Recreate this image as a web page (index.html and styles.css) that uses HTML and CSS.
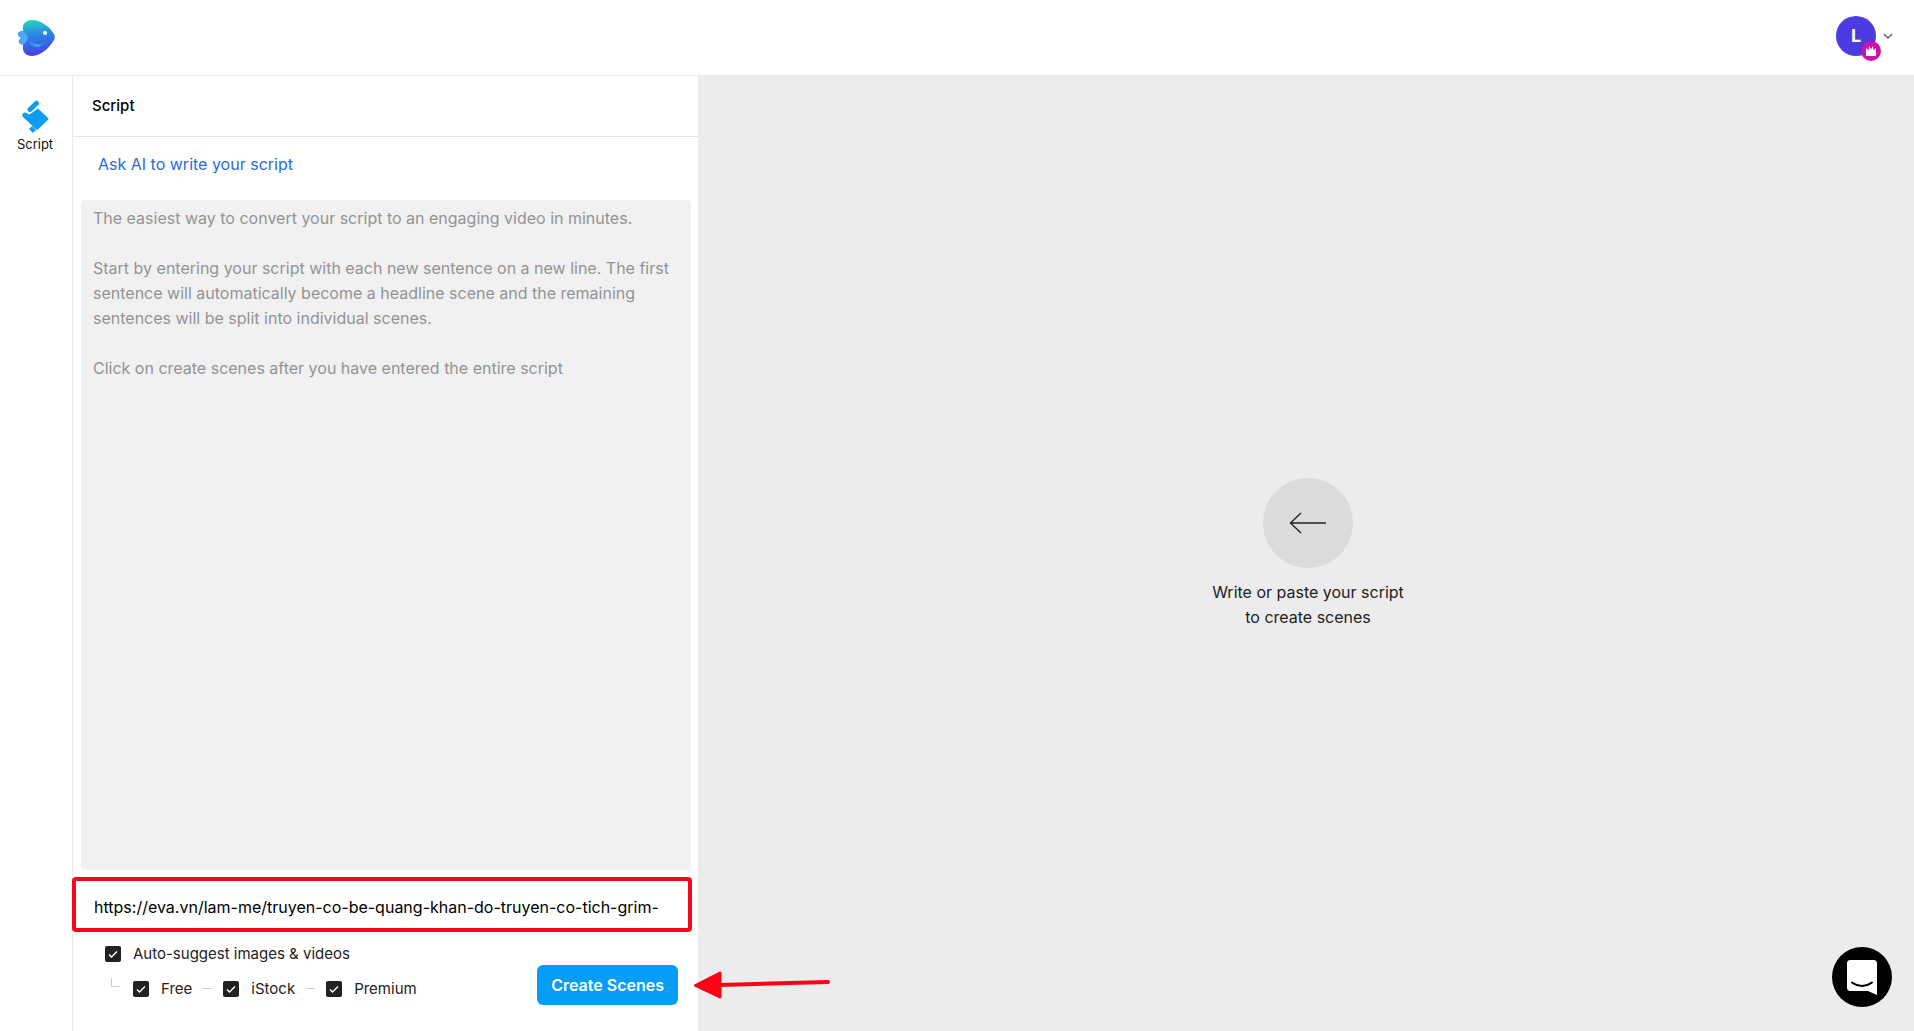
FILE: index.html
```html
<!DOCTYPE html>
<html lang="en">
<head>
<meta charset="utf-8">
<meta name="viewport" content="width=device-width, initial-scale=1">
<title>Script</title>
<link rel="stylesheet" href="styles.css">
</head>
<body>
<div class="app">
  <header class="topbar">
    <a class="logo" href="#" aria-label="Home">
      <svg width="38" height="38" viewBox="0 0 38 38" aria-hidden="true">
        <defs>
          <linearGradient id="body" x1="0.4" y1="0" x2="0.5" y2="1">
            <stop offset="0" stop-color="#22d3c0"/>
            <stop offset="0.45" stop-color="#2b7fe6"/>
            <stop offset="0.72" stop-color="#3d5ee8"/>
            <stop offset="1" stop-color="#4a3be0"/>
          </linearGradient>
          <linearGradient id="smile" x1="0" y1="0" x2="1" y2="0">
            <stop offset="0" stop-color="#2f8af0"/>
            <stop offset="0.5" stop-color="#2db4e4"/>
            <stop offset="1" stop-color="#3565e8"/>
          </linearGradient>
        </defs>
        <path d="M10 12C6 11 2 12 1 14c-1 2 1 4 3 5-2 1-3 3-2 5 2 2 6 3 8 1z" fill="#4aa3f5"/>
        <path d="M6 10C5 5 9 1 15 1c9 0 18 7 22 14 1 2 1 4 0 6-4 7-13 16-22 16-6 0-10-4-9-10 0-3 2-4 3-6 1-1 1-3 0-4-1-2-3-4-3-7z" fill="url(#body)"/>
        <path d="M5 13c3 0 5 3 6 6-1 3-3 6-6 7z" fill="#56a8f7"/>
        <path d="M12 21c4 5 11 6 17 1-2 4-6 6-9 6-4 0-8-3-8-7z" fill="url(#smile)"/>
        <circle cx="28" cy="14" r="2" fill="#fff"/>
      </svg>
    </a>
    <button class="account" type="button" aria-label="Account menu">
      <span class="avatar">L
        <span class="badge">
          <svg width="12" height="12" viewBox="0 0 12 12" aria-hidden="true"><path d="M1 3l2.600 2.500L4 1l2 3.500L8 1l.4 4.500L11 3v8H1z" fill="#fff"/></svg>
        </span>
      </span>
      <svg width="10" height="6" viewBox="0 0 10 6" aria-hidden="true"><path d="M1 1l4 4 4-4" fill="none" stroke="#666" stroke-width="1.500"/></svg>
    </button>
  </header>

  <div class="workspace">
    <nav class="rail">
      <a class="rail-item" href="#">
        <svg width="28" height="34" viewBox="0 0 28 34" aria-hidden="true">
          <path d="M1.500 14c1-1.500 3-2 5-.5l1.500 1L17 8.500 27 18c.6.600.6 1.200 0 1.800L17 29.500c-.6.600-1.200.6-1.800 0L2.500 17.500C1.200 16.400 1 15 1.500 14z" fill="#0f9df2"/>
          <path d="M9 9.500L15.500 3.200" stroke="#fff" stroke-width="7.500" stroke-linecap="round"/>
          <path d="M9 9.500L15.500 3.200" stroke="#0f9df2" stroke-width="5" stroke-linecap="round"/>
          <path d="M9.500 27.500l4 4" stroke="#0f9df2" stroke-width="4.500"/>
        </svg>
        <span>Script</span>
      </a>
    </nav>

    <section class="panel">
      <h1 class="panel-title">Script</h1>
      <div class="editor">
        <a class="ask-ai" href="#">Ask AI to write your script</a>
        <textarea class="script-box" aria-label="Script" placeholder="The easiest way to convert your script to an engaging video in minutes.&#10;&#10;Start by entering your script with each new sentence on a new line. The first sentence will automatically become a headline scene and the remaining sentences will be split into individual scenes.&#10;&#10;Click on create scenes after you have entered the entire script"></textarea>
      </div>
      <div class="url-row">
        <input class="url-input" type="text" aria-label="Article URL" value="https://eva.vn/lam-me/truyen-co-be-quang-khan-do-truyen-co-tich-grim-">
        <span class="highlight"></span>
      </div>
      <div class="actions">
        <div class="options">
          <label class="check"><input type="checkbox" checked>Auto-suggest images &amp; videos</label>
          <div class="sources">
            <span class="elbow"></span>
            <label class="check"><input type="checkbox" checked>Free</label>
            <span class="dash"></span>
            <label class="check"><input type="checkbox" checked>iStock</label>
            <span class="dash"></span>
            <label class="check"><input type="checkbox" checked>Premium</label>
          </div>
        </div>
        <div class="create-wrap">
          <button class="create" type="button">Create Scenes</button>
          <svg class="pointer" width="138" height="30" viewBox="0 0 138 30" aria-hidden="true">
            <path d="M26 15L135 12" stroke="#fb0516" stroke-width="4" stroke-linecap="round"/>
            <path d="M2.500 15.500L27 3v24z" fill="#fb0516" stroke="#fb0516" stroke-width="3" stroke-linejoin="round"/>
          </svg>
        </div>
      </div>
    </section>

    <main class="stage">
      <span class="stage-icon">
        <svg width="38" height="22" viewBox="0 0 38 22" aria-hidden="true"><path d="M37 11H1.500M12 1L1.500 11 12 21" fill="none" stroke="#222" stroke-width="1.400"/></svg>
      </span>
      <p class="stage-text">Write or paste your script<br>to create scenes</p>
    </main>
  </div>

  <button class="chat" type="button" aria-label="Open chat">
    <svg width="30" height="35" viewBox="0 0 30 35" aria-hidden="true">
      <path d="M4 0h22c3 0 4 1 4 4v31l-9-4H4c-3 0-4-1-4-4V4c0-3 1-4 4-4z" fill="#fff"/>
      <path d="M5 22.500c6 4.500 14 4.500 20 0" fill="none" stroke="#000" stroke-width="2" stroke-linecap="round"/>
    </svg>
  </button>
</div>
</body>
</html>
```
FILE: styles.css
```css
*, *::before, *::after { box-sizing: border-box; }

body {
  margin: 0;
  font-family: Inter, "Liberation Sans", sans-serif;
  font-size: 16px;
  line-height: 25px;
  color: #222;
  background: #fff;
}

button, input, textarea { font: inherit; color: inherit; }
button { border: 0; cursor: pointer; }
a { text-decoration: none; }
svg { display: block; }

.app {
  display: flex;
  flex-direction: column;
  min-height: 100vh;
}

/* Top bar */
.topbar {
  display: flex;
  align-items: center;
  justify-content: space-between;
  height: 76px;
  padding: 0 21px 0 17px;
  border-bottom: 1px solid #e9e9e9;
}

.account {
  display: flex;
  align-items: center;
  gap: 7px;
  padding: 0;
  margin-bottom: 4px;
  background: none;
}

.avatar {
  position: relative;
  display: flex;
  align-items: center;
  justify-content: center;
  width: 40px;
  height: 40px;
  border-radius: 50%;
  background: #4c3be0;
  color: #fff;
  font-size: 18px;
  font-weight: 700;
}

.badge {
  position: absolute;
  right: -5px;
  bottom: -5px;
  display: flex;
  align-items: center;
  justify-content: center;
  width: 20px;
  height: 20px;
  border-radius: 50%;
  background: #c715a8;
}

/* Columns */
.workspace {
  display: flex;
  flex: 1;
}

.rail {
  width: 73px;
  padding: 24px 2px 0 0;
  border-right: 1px solid #e9e9e9;
}

.rail-item {
  display: flex;
  flex-direction: column;
  align-items: center;
  color: #111;
  font-size: 13px;
  line-height: 20px;
}

.panel {
  display: flex;
  flex-direction: column;
  width: 625px;
}

.panel-title {
  margin: 0;
  padding: 17px 19px 18px;
  border-bottom: 1px solid #e2e2e2;
  color: #000;
  font-size: 15px;
  font-weight: 500;
}

.editor {
  display: flex;
  flex: 1;
  flex-direction: column;
  padding: 15px 7px 8px 8px;
}

.ask-ai {
  align-self: flex-start;
  margin: 0 17px 23px;
  color: #2b6ae0;
}

.script-box {
  flex: 1;
  min-height: 240px;
  padding: 6px 4px 6px 12px;
  border: 0;
  border-radius: 4px;
  background: #f1f1f1;
  resize: none;
}

.script-box::placeholder { color: #939393; opacity: 1; }

.url-row {
  position: relative;
  border-top: 1px solid #ededed;
  border-bottom: 1px solid #ededed;
}

.url-input {
  display: block;
  width: 100%;
  height: 55px;
  padding: 0 20px 0 21px;
  border: 0;
  background: none;
  color: #000;
}

.highlight {
  position: absolute;
  inset: -2px 6px 2px -1px;
  border: 4px solid #f8061c;
  border-radius: 4px;
  pointer-events: none;
}

/* Footer of the panel */
.actions {
  display: flex;
  align-items: flex-start;
  justify-content: space-between;
  padding: 6px 20px 26px 32px;
}

.options {
  display: flex;
  flex-direction: column;
  gap: 10px;
  font-size: 15px;
}

.check {
  display: flex;
  align-items: center;
  gap: 12px;
}

.check input {
  appearance: none;
  width: 16px;
  height: 16px;
  margin: 0;
  border-radius: 2px;
  background: #222 url("data:image/svg+xml,%3Csvg xmlns='http://www.w3.org/2000/svg' viewBox='0 0 16 16'%3E%3Cpath d='M4 8.500l2.500 2.500L12 5.500' fill='none' stroke='white' stroke-width='1.400'/%3E%3C/svg%3E");
}

.sources {
  display: flex;
  align-items: center;
  gap: 11px;
}

.elbow {
  width: 9px;
  height: 9px;
  margin: 0 2px 12px 6px;
  border-left: 1px solid #ccc;
  border-bottom: 1px solid #ccc;
}

.dash {
  width: 9px;
  height: 1px;
  background: #ccc;
}

.create-wrap {
  position: relative;
  margin-top: 24px;
}

.create {
  display: block;
  height: 40px;
  padding: 0 14px;
  border-radius: 6px;
  background: #069df8;
  color: #fff;
  font-weight: 600;
}

.pointer {
  position: absolute;
  top: 5px;
  left: 100%;
  margin-left: 15px;
}

/* Preview area */
.stage {
  display: flex;
  flex: 1;
  flex-direction: column;
  align-items: center;
  justify-content: center;
  gap: 12px;
  padding-left: 4px;
  background: #ececec;
}

.stage-icon {
  display: flex;
  align-items: center;
  justify-content: center;
  width: 90px;
  height: 90px;
  border-radius: 50%;
  background: #dcdcdc;
}

.stage-text {
  margin: 0;
  text-align: center;
}

.chat {
  position: fixed;
  right: 22px;
  bottom: 24px;
  display: flex;
  align-items: center;
  justify-content: center;
  width: 60px;
  height: 60px;
  padding: 0;
  border-radius: 50%;
  background: #000;
}
```
